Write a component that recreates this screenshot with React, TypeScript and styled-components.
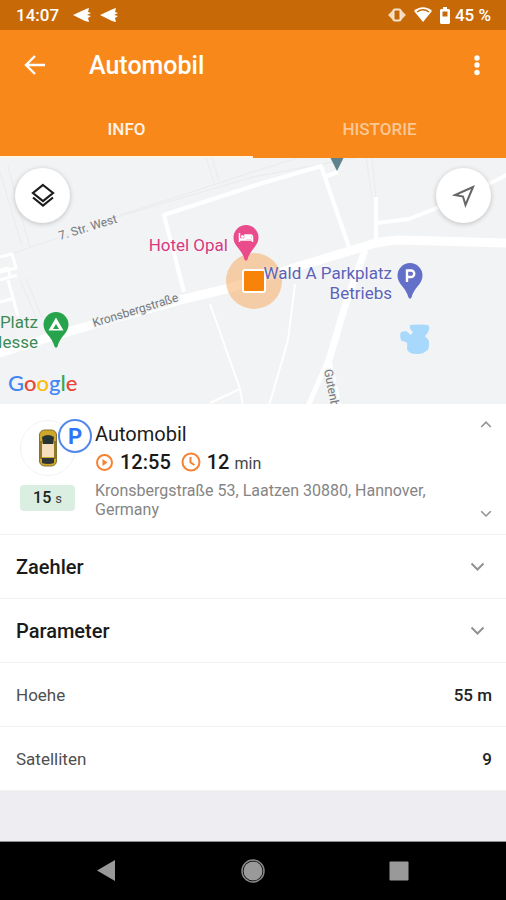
import React from "react";
import styled, { createGlobalStyle } from "styled-components";

const GlobalStyle = createGlobalStyle`
  * { box-sizing: border-box; }
  body { margin: 0; font-family: Roboto, "Liberation Sans", sans-serif; background: #eeeef2; }
  button { font: inherit; color: inherit; background: none; border: 0; padding: 0; margin: 0; }
  svg { display: block; }
`;

const Page = styled.div`
  min-height: 100vh;
  display: flex;
  flex-direction: column;
  background: #eeeef2;
`;

const StatusBar = styled.div`
  height: 30px;
  padding: 0 15px 0 16px;
  display: flex;
  align-items: center;
  justify-content: space-between;
  background: #c86908;
  color: #fff;
  font-size: 17px;
  font-weight: 500;
`;

const StatusGroup = styled.div<{ $gap: number }>`
  display: flex;
  align-items: center;
  gap: ${(p) => p.$gap}px;
`;

const Header = styled.header`
  background: #f78819;
  color: #fff;
`;

const TitleBar = styled.div`
  height: 71px;
  padding: 0 17px 0 23px;
  display: flex;
  align-items: center;
`;

const IconButton = styled.button`
  width: 24px;
  height: 24px;
  display: grid;
  place-items: center;
`;

const Title = styled.h1`
  flex: 1;
  margin: 0 0 0 42px;
  font-size: 25px;
  line-height: 32px;
  font-weight: 500;
`;

const Tabs = styled.div`
  height: 57px;
  display: grid;
  grid-template-columns: 1fr 1fr;
`;

const Tab = styled.button<{ $active?: boolean }>`
  && {
    border-bottom: 2px solid ${(p) => (p.$active ? "#fff3e6" : "#f78819")};
    color: ${(p) => (p.$active ? "#fff3e6" : "#fbc795")};
    font-size: 17px;
    font-weight: 500;
  }
`;

const MapArea = styled.section`
  position: relative;
  height: 246px;
  overflow: hidden;
  background: #f1f3f4;
`;

const MapDrawing = styled.svg`
  width: 100%;
  height: 100%;
`;

const MapButton = styled.button<{ $side: "left" | "right" }>`
  && {
    position: absolute;
    top: 10px;
    ${(p) => p.$side}: 15px;
    width: 55px;
    height: 55px;
    border-radius: 50%;
    display: grid;
    place-items: center;
    background: #fff;
    box-shadow: 0 1px 5px rgba(0, 0, 0, 0.22);
  }
`;

const Place = styled.div<{ $x: number; $y: number; $color: string }>`
  position: absolute;
  right: calc(100% - ${(p) => p.$x}px);
  top: ${(p) => p.$y}px;
  display: flex;
  align-items: flex-start;
  gap: 5px;
  color: ${(p) => p.$color};
  font-size: 17px;
  line-height: 20px;
  text-align: right;
  white-space: nowrap;
`;

const PlaceName = styled.span<{ $drop: number }>`
  padding-top: ${(p) => p.$drop}px;
  text-shadow: 0 0 2px #fff;
`;

const VehicleMarker = styled.div`
  position: absolute;
  left: 226px;
  top: 95px;
  width: 56px;
  height: 56px;
  border-radius: 50%;
  display: grid;
  place-items: center;
  background: rgba(247, 165, 85, 0.5);
`;

const VehicleSquare = styled.div`
  width: 24px;
  height: 24px;
  border: 2px solid #fff;
  border-radius: 3px;
  background: #f78409;
`;

const GoogleMark = styled.div`
  position: absolute;
  left: 8px;
  bottom: 8px;
  font-family: Lato, sans-serif;
  font-size: 22px;
  line-height: 26px;
  font-weight: 500;
`;

const Letter = styled.span<{ $color: string }>`
  color: ${(p) => p.$color};
`;

const VehicleCard = styled.section`
  display: grid;
  grid-template-columns: 75px 1fr 24px;
  padding: 16px 8px 15px 20px;
  border-bottom: 1px solid #f2f2f2;
  background: #fff;
`;

const VehicleSide = styled.div`
  display: flex;
  flex-direction: column;
  gap: 9px;
`;

const Avatar = styled.div`
  position: relative;
  width: 56px;
  height: 56px;
  border: 1px solid #f3f3f3;
  border-radius: 50%;
  display: grid;
  place-items: center;
`;

const ParkingBadge = styled.span`
  position: absolute;
  left: 37px;
  top: -2px;
  width: 34px;
  height: 34px;
  border: 2px solid #5388ea;
  border-radius: 50%;
  display: grid;
  place-items: center;
  background: #fff;
  color: #2d76f5;
  font-size: 22px;
  font-weight: 700;
`;

const AgeTag = styled.div`
  width: 55px;
  height: 26px;
  border-radius: 4px;
  background: #dbeee2;
  color: #222;
  font-size: 16px;
  line-height: 26px;
  font-weight: 500;
  text-align: center;
`;

const Unit = styled.span<{ $size: number }>`
  font-size: ${(p) => p.$size}px;
  font-weight: 400;
  color: #444;
`;

const VehicleName = styled.h2`
  margin: 0;
  color: #1c1c1c;
  font-size: 20px;
  line-height: 28px;
  font-weight: 400;
`;

const Times = styled.div`
  display: flex;
  gap: 10px;
  height: 28px;
`;

const Time = styled.div`
  display: flex;
  align-items: center;
  gap: 6px;
  color: #1a1a1a;
  font-size: 20px;
  font-weight: 500;
`;

const Address = styled.p`
  margin: 5px 0 0;
  color: #858585;
  font-size: 16px;
  line-height: 19px;
`;

const Steps = styled.div`
  display: flex;
  flex-direction: column;
  justify-content: space-between;
  align-items: center;
  color: #8a8a8a;
`;

const StepButton = styled.button`
  height: 10px;
`;

const SectionRow = styled.button`
  && {
    width: 100%;
    height: 64px;
    padding: 0 21px 0 16px;
    display: flex;
    align-items: center;
    justify-content: space-between;
    border-bottom: 1px solid #f2f2f2;
    background: #fff;
    color: #1a1a1a;
    font-size: 20px;
    font-weight: 500;
  }
`;

const Values = styled.dl`
  margin: 0;
`;

const ValueRow = styled.div`
  height: 64px;
  padding: 0 14px 0 16px;
  display: flex;
  align-items: center;
  justify-content: space-between;
  border-bottom: 1px solid #f2f2f2;
  background: #fff;
  font-size: 17px;
`;

const Term = styled.dt`
  color: #4f4f4f;
`;

const Detail = styled.dd`
  margin: 0;
  color: #222;
  font-weight: 500;
`;

const NavBar = styled.nav`
  height: 59px;
  margin-top: auto;
  border-top: 1px solid #8d8d8f;
  display: grid;
  grid-template-columns: repeat(3, 146px);
  justify-content: center;
  align-items: center;
  justify-items: center;
  background: #000;
`;

const Bird = () => (
  <svg width="18" height="16" viewBox="0 0 18 16" fill="#fff">
    <path d="M0 8 13 2l3-1-1 4 3 1-4 2 4 1-3 2 1 4-4-1-4-2z" />
  </svg>
);

const Pin = ({ color, children }: { color: string; children?: React.ReactNode }) => (
  <svg width="26" height="36" viewBox="0 0 26 36">
    <path d="M13 0a12.500 12.500 0 0 0-12.500 12.500c0 9 8.500 11.500 11 22 .5 1.500 2.500 1.500 3 0 2.500-10.500 11-13 11-22A12.500 12.500 0 0 0 13 0z" fill={color} />
    {children}
  </svg>
);

const Chevron = ({ up, size }: { up?: boolean; size: number }) => (
  <svg width={size} height={size * 0.6} viewBox="0 0 15 9" fill="none" stroke="#929292" strokeWidth="2">
    <path d={up ? "M1.500 7.500 7.500 1.500l6 6" : "M1.500 1.500 7.500 7.500l6-6"} />
  </svg>
);

const Streets = () => (
  <MapDrawing viewBox="0 158 506 246" preserveAspectRatio="xMinYMin slice" aria-hidden="true">
    <g fill="none" stroke="#e9ebed" strokeWidth="1">
      <path d="M0 258 130 213 253 177 360 157M120 215 253 172 300 157M0 172 22 246M8 166 30 248M206 157l8 26M212 157l7 24M372 157l4 42M366 157l6 40M20 280l18 42M26 278l16 40" />
    </g>
    <g fill="none" stroke="#fff" strokeLinejoin="round">
      <path d="M-4 354 60 334 180 300 226 289 300 266 366 246Q380 241 400 240L510 243" strokeWidth="9" />
      <path d="M184 292 164 215 253 186 321 166 350 250M324 177l14-5" strokeWidth="4" />
      <path d="M376 197v46M377 223l32-4 28-11 60-28 13-7" strokeWidth="4" />
      <path d="M365 250 345 306 329 360" strokeWidth="7" />
      <path d="M329 358 308 406M329 360l10 46" strokeWidth="5" />
      <path d="M295 284 288 340 269 406M210 304l30 85 3 17M240 389l-30 14" strokeWidth="2" />
      <path d="M0 257l12-3 4 14-16 4M17 275 0 280M8 280l10 36M0 302l14-4M0 270l8-2 2 8" strokeWidth="3" />
    </g>
    <path d="M410 325q9-1 18 0c3 3 0 8-3 11 1 2 4 3 4 6 0 5 0 8-3 9-3 3-6 3-10 3-4 0-6-1-8-3-2-3 0-5-1-8-1-2-5-1-6-3-1-3-1-6 0-8l5-1 5 4 2-3q-4-3-3-7z" fill="#a8d8fc" />
    <path d="M330 157h14l-7 14z" fill="#60828c" />
    <g fill="#74787c" stroke="#f1f3f4" strokeWidth="3" paintOrder="stroke" fontSize="12">
      <text transform="translate(60 240) rotate(-17)">7. Str. West</text>
      <text transform="translate(94 327) rotate(-17)">Kronsbergstraße</text>
      <text transform="translate(324 370) rotate(79)">Gutenb</text>
    </g>
  </MapDrawing>
);

const googleLetters: [string, string][] = [
  ["G", "#4285f4"],
  ["o", "#ea4335"],
  ["o", "#fbbc05"],
  ["g", "#4285f4"],
  ["l", "#34a853"],
  ["e", "#ea4335"],
];

export default function App() {
  return (
    <Page>
      <GlobalStyle />
      <StatusBar>
        <StatusGroup $gap={9}>
          <StatusGroup $gap={14}>
            <span>14:07</span>
            <Bird />
          </StatusGroup>
          <Bird />
        </StatusGroup>
        <StatusGroup $gap={5}>
          <StatusGroup $gap={8}>
            <svg width="18" height="16" viewBox="0 0 18 16">
              <path d="M5 3 0 8l5 5zM13 3v10l5-5z" fill="#f5d9b8" />
              <rect x="5.500" y="2.500" width="7" height="11" rx="1.500" fill="#c86908" stroke="#f8e4cc" strokeWidth="2" />
            </svg>
            <svg width="18" height="16" viewBox="0 0 18 16">
              <path d="M0 4C5-1 13-1 18 4L9 15z" fill="#fff" />
              <path d="M3 5C7 2 11 2 15 5" fill="none" stroke="#c86908" strokeWidth="1.500" />
            </svg>
            <svg width="10" height="17" viewBox="0 0 10 17">
              <path d="M3 0h4v2h2l1 1v13l-1 1H1l-1-1V3l1-1h2z" fill="#fff" />
              <path d="M2.500 4.500h5v5h-5z" fill="#c86908" />
            </svg>
          </StatusGroup>
          <span>45 %</span>
        </StatusGroup>
      </StatusBar>

      <Header>
        <TitleBar>
          <IconButton aria-label="Zurück">
            <svg width="22" height="22" viewBox="0 0 22 22" fill="none" stroke="#fff" strokeWidth="2.400">
              <path d="M21 10H2.500M11 1 2 10l9 9" />
            </svg>
          </IconButton>
          <Title>Automobil</Title>
          <IconButton aria-label="Menü">
            <svg width="6" height="22" viewBox="0 0 6 22" fill="#fff">
              <circle cx="3" cy="3" r="2.700" />
              <circle cx="3" cy="10" r="2.700" />
              <circle cx="3" cy="17.500" r="2.700" />
            </svg>
          </IconButton>
        </TitleBar>
        <Tabs role="tablist">
          <Tab role="tab" aria-selected="true" $active>INFO</Tab>
          <Tab role="tab" aria-selected="false">HISTORIE</Tab>
        </Tabs>
      </Header>

      <MapArea>
        <Streets />
        <VehicleMarker>
          <VehicleSquare />
        </VehicleMarker>
        <Place $x={259} $y={67} $color="#d6387f">
          <PlaceName $drop={10}>Hotel Opal</PlaceName>
          <Pin color="#ea4b8b">
            <path d="M6.500 8v9M6.500 15h13v2M19.500 15v-3q0-2-2-2H12v4H7" fill="none" stroke="#fff" strokeWidth="1.500" />
            <circle cx="9.500" cy="11.500" r="1.500" fill="#fff" />
            <path d="M12 10h6l1 4h-7z" fill="#fff" />
          </Pin>
        </Place>
        <Place $x={423} $y={105} $color="#5b62b8">
          <PlaceName $drop={0}>Wald A Parkplatz<br />Betriebs</PlaceName>
          <Pin color="#6370c9">
            <path d="M10 19V7.500h4a3.200 3.200 0 0 1 0 6.500h-4" fill="none" stroke="#fff" strokeWidth="2.400" />
          </Pin>
        </Place>
        <Place $x={69} $y={154} $color="#3c8a55">
          <PlaceName $drop={0}>Platz<br />Messe</PlaceName>
          <Pin color="#27a34c">
            <path d="M13 5.500 5.500 18.500h15zM13 12l3 5h-6z" fill="#fff" fillRule="evenodd" />
          </Pin>
        </Place>
        <GoogleMark>
          {googleLetters.map(([char, color], i) => (
            <Letter key={i} $color={color}>{char}</Letter>
          ))}
        </GoogleMark>
        <MapButton $side="left" aria-label="Ebenen">
          <svg width="24" height="26" viewBox="0 0 24 26" fill="none" stroke="#1c1c1c" strokeWidth="2.200">
            <path d="M12 2 22 10 12 18 2 10zM2 14.500l10 8 10-8" />
          </svg>
        </MapButton>
        <MapButton $side="right" aria-label="Standort">
          <svg width="24" height="24" viewBox="0 0 24 24" fill="none" stroke="#666" strokeWidth="2">
            <path d="M21 3 13.500 21l-2.500-8.500L3 11z" />
          </svg>
        </MapButton>
      </MapArea>

      <VehicleCard>
        <VehicleSide>
          <Avatar>
            <svg width="18" height="38" viewBox="0 0 18 38">
              <rect x="0.500" y="1" width="17" height="36" rx="5" fill="#cda62b" stroke="#82712f" />
              <path d="M3 8q6-4 12 0l-1 7H4z" fill="#283434" />
              <rect x="3" y="15" width="12" height="13" fill="#f7dfbd" />
              <path d="M3 29h12v5q-6 2-12 0z" fill="#303535" />
              <path d="M2 12v18M16 12v18" stroke="#544b29" />
            </svg>
            <ParkingBadge>P</ParkingBadge>
          </Avatar>
          <AgeTag>15 <Unit $size={13}>s</Unit></AgeTag>
        </VehicleSide>
        <div>
          <VehicleName>Automobil</VehicleName>
          <Times>
            <Time>
              <svg width="19" height="19" viewBox="0 0 19 19" fill="none" stroke="#f58232" strokeWidth="2">
                <circle cx="9.500" cy="9.500" r="7.500" />
                <path d="M7.500 6v7l5-3.500z" fill="#f58232" stroke="none" />
              </svg>
              <span>12:55</span>
            </Time>
            <Time>
              <svg width="20" height="20" viewBox="0 0 20 20" fill="none" stroke="#f58232" strokeWidth="2">
                <circle cx="10" cy="10" r="8.500" />
                <path d="M9.500 5v5.500l4 2.500" />
              </svg>
              <span>12 <Unit $size={16}>min</Unit></span>
            </Time>
          </Times>
          <Address>Kronsbergstraße 53, Laatzen 30880, Hannover, Germany</Address>
        </div>
        <Steps>
          <StepButton aria-label="Vorheriges"><Chevron up size={12} /></StepButton>
          <StepButton aria-label="Nächstes"><Chevron size={12} /></StepButton>
        </Steps>
      </VehicleCard>

      <SectionRow aria-expanded="false">Zaehler<Chevron size={15} /></SectionRow>
      <SectionRow aria-expanded="false">Parameter<Chevron size={15} /></SectionRow>
      <Values>
        <ValueRow><Term>Hoehe</Term><Detail>55 m</Detail></ValueRow>
        <ValueRow><Term>Satelliten</Term><Detail>9</Detail></ValueRow>
      </Values>

      <NavBar>
        <IconButton aria-label="Systemzurück">
          <svg width="20" height="22" viewBox="0 0 20 22"><path d="M18 0v21L0 10.500z" fill="#999" /></svg>
        </IconButton>
        <IconButton aria-label="Startbildschirm">
          <svg width="24" height="24" viewBox="0 0 24 24">
            <circle cx="12" cy="12" r="11" fill="#000" stroke="#888" strokeWidth="1.500" />
            <circle cx="12" cy="12" r="9.500" fill="#999" />
          </svg>
        </IconButton>
        <IconButton aria-label="Letzte Apps">
          <svg width="20" height="20" viewBox="0 0 20 20"><rect x="0.500" y="0.500" width="19" height="19" rx="1" fill="#999" /></svg>
        </IconButton>
      </NavBar>
    </Page>
  );
}
